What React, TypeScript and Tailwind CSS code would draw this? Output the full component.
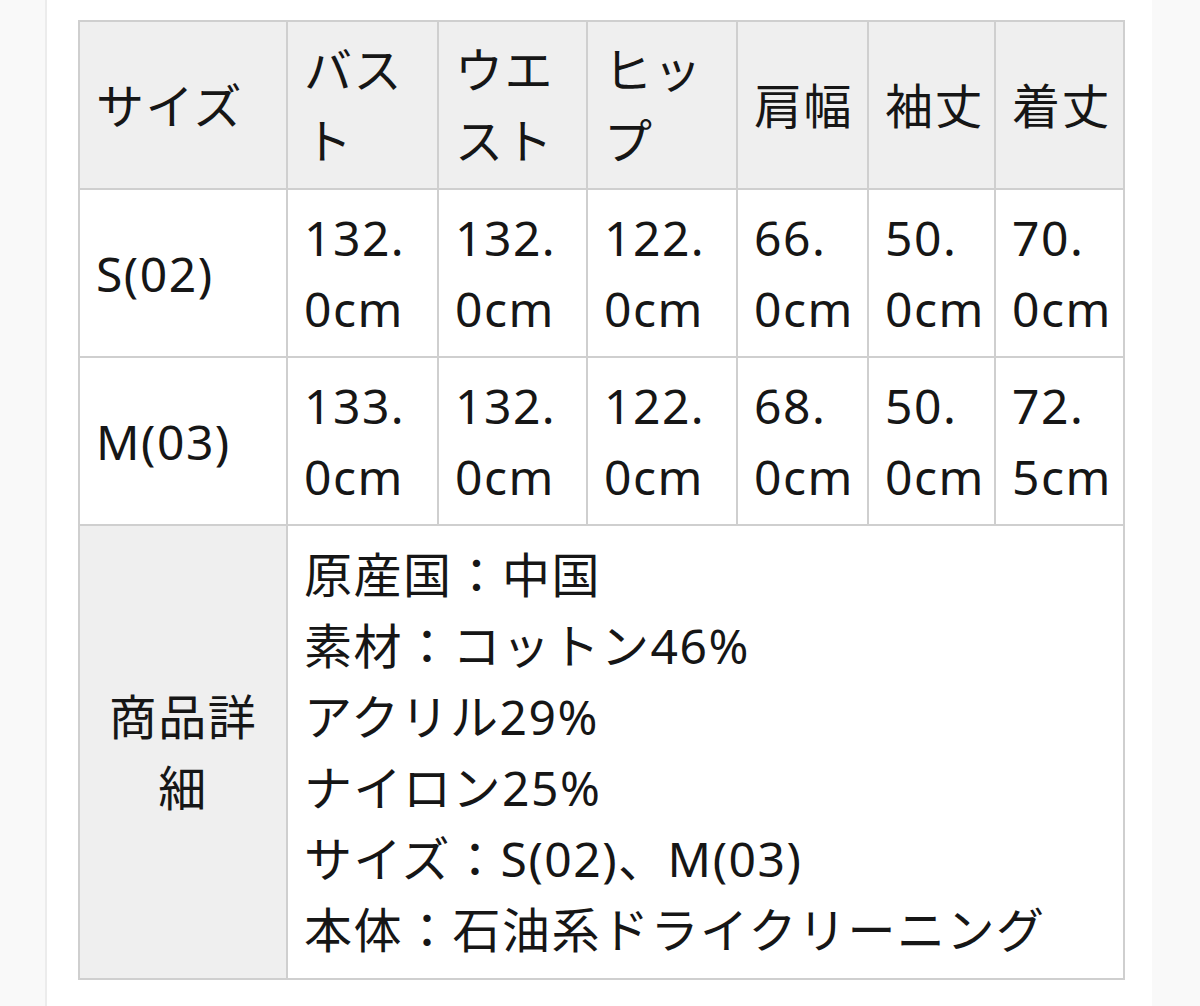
import React from 'react'

const font = { fontFamily: '"Noto Sans", "Noto Sans CJK JP", sans-serif' }

const headers = [['サイズ'], ['バス', 'ト'], ['ウエ', 'スト'], ['ヒッ', 'プ'], ['肩幅'], ['袖丈'], ['着丈']]

const rows = [
  { size: 'S(02)', values: [['132.', '0cm'], ['132.', '0cm'], ['122.', '0cm'], ['66.', '0cm'], ['50.', '0cm'], ['70.', '0cm']] },
  { size: 'M(03)', values: [['133.', '0cm'], ['132.', '0cm'], ['122.', '0cm'], ['68.', '0cm'], ['50.', '0cm'], ['72.', '5cm']] },
]

const details = [
  '原産国：中国',
  '素材：コットン46%',
  'アクリル29%',
  'ナイロン25%',
  'サイズ：S(02)、M(03)',
  '本体：石油系ドライクリーニング',
]

function Lines({ lines }: { lines: string[] }) {
  return (
    <>
      {lines.map((l, i) => (
        <React.Fragment key={i}>
          {i > 0 && <br />}
          {l}
        </React.Fragment>
      ))}
    </>
  )
}

const cell = 'border-2 border-[#cfcfcf] px-4 py-3 align-middle'

export default function App() {
  return (
    <div className="min-h-screen bg-[#f9f9f9]" style={font}>
      <div className="ml-[45px] w-[1107px] min-h-[1006px] border-l-2 border-[#ececec] bg-white pl-[31px] pt-[20px]">
        <table className="w-[1045px] table-fixed border-collapse text-[48px] leading-[71px] tracking-[1.5px] text-[#161616]">
          <colgroup>
            <col className="w-[208px]" />
            <col className="w-[151px]" />
            <col className="w-[149px]" />
            <col className="w-[150px]" />
            <col className="w-[131px]" />
            <col className="w-[127px]" />
            <col className="w-[129px]" />
          </colgroup>
          <thead>
            <tr className="h-[168px] bg-[#efefef]">
              {headers.map((h, i) => (
                <th key={i} className={`${cell} text-left font-normal whitespace-nowrap`}>
                  <Lines lines={h} />
                </th>
              ))}
            </tr>
          </thead>
          <tbody>
            {rows.map(r => (
              <tr key={r.size} className="h-[168px]">
                <td className={`${cell} text-left whitespace-nowrap`}>{r.size}</td>
                {r.values.map((v, i) => (
                  <td key={i} className={`${cell} text-left whitespace-nowrap`}>
                    <Lines lines={v} />
                  </td>
                ))}
              </tr>
            ))}
            <tr>
              <td className={`${cell} bg-[#efefef] text-center`}>
                商品詳
                <br />
                細
              </td>
              <td colSpan={6} className={`${cell} text-left whitespace-nowrap py-[13px]`}>
                <Lines lines={details} />
              </td>
            </tr>
          </tbody>
        </table>
      </div>
    </div>
  )
}
